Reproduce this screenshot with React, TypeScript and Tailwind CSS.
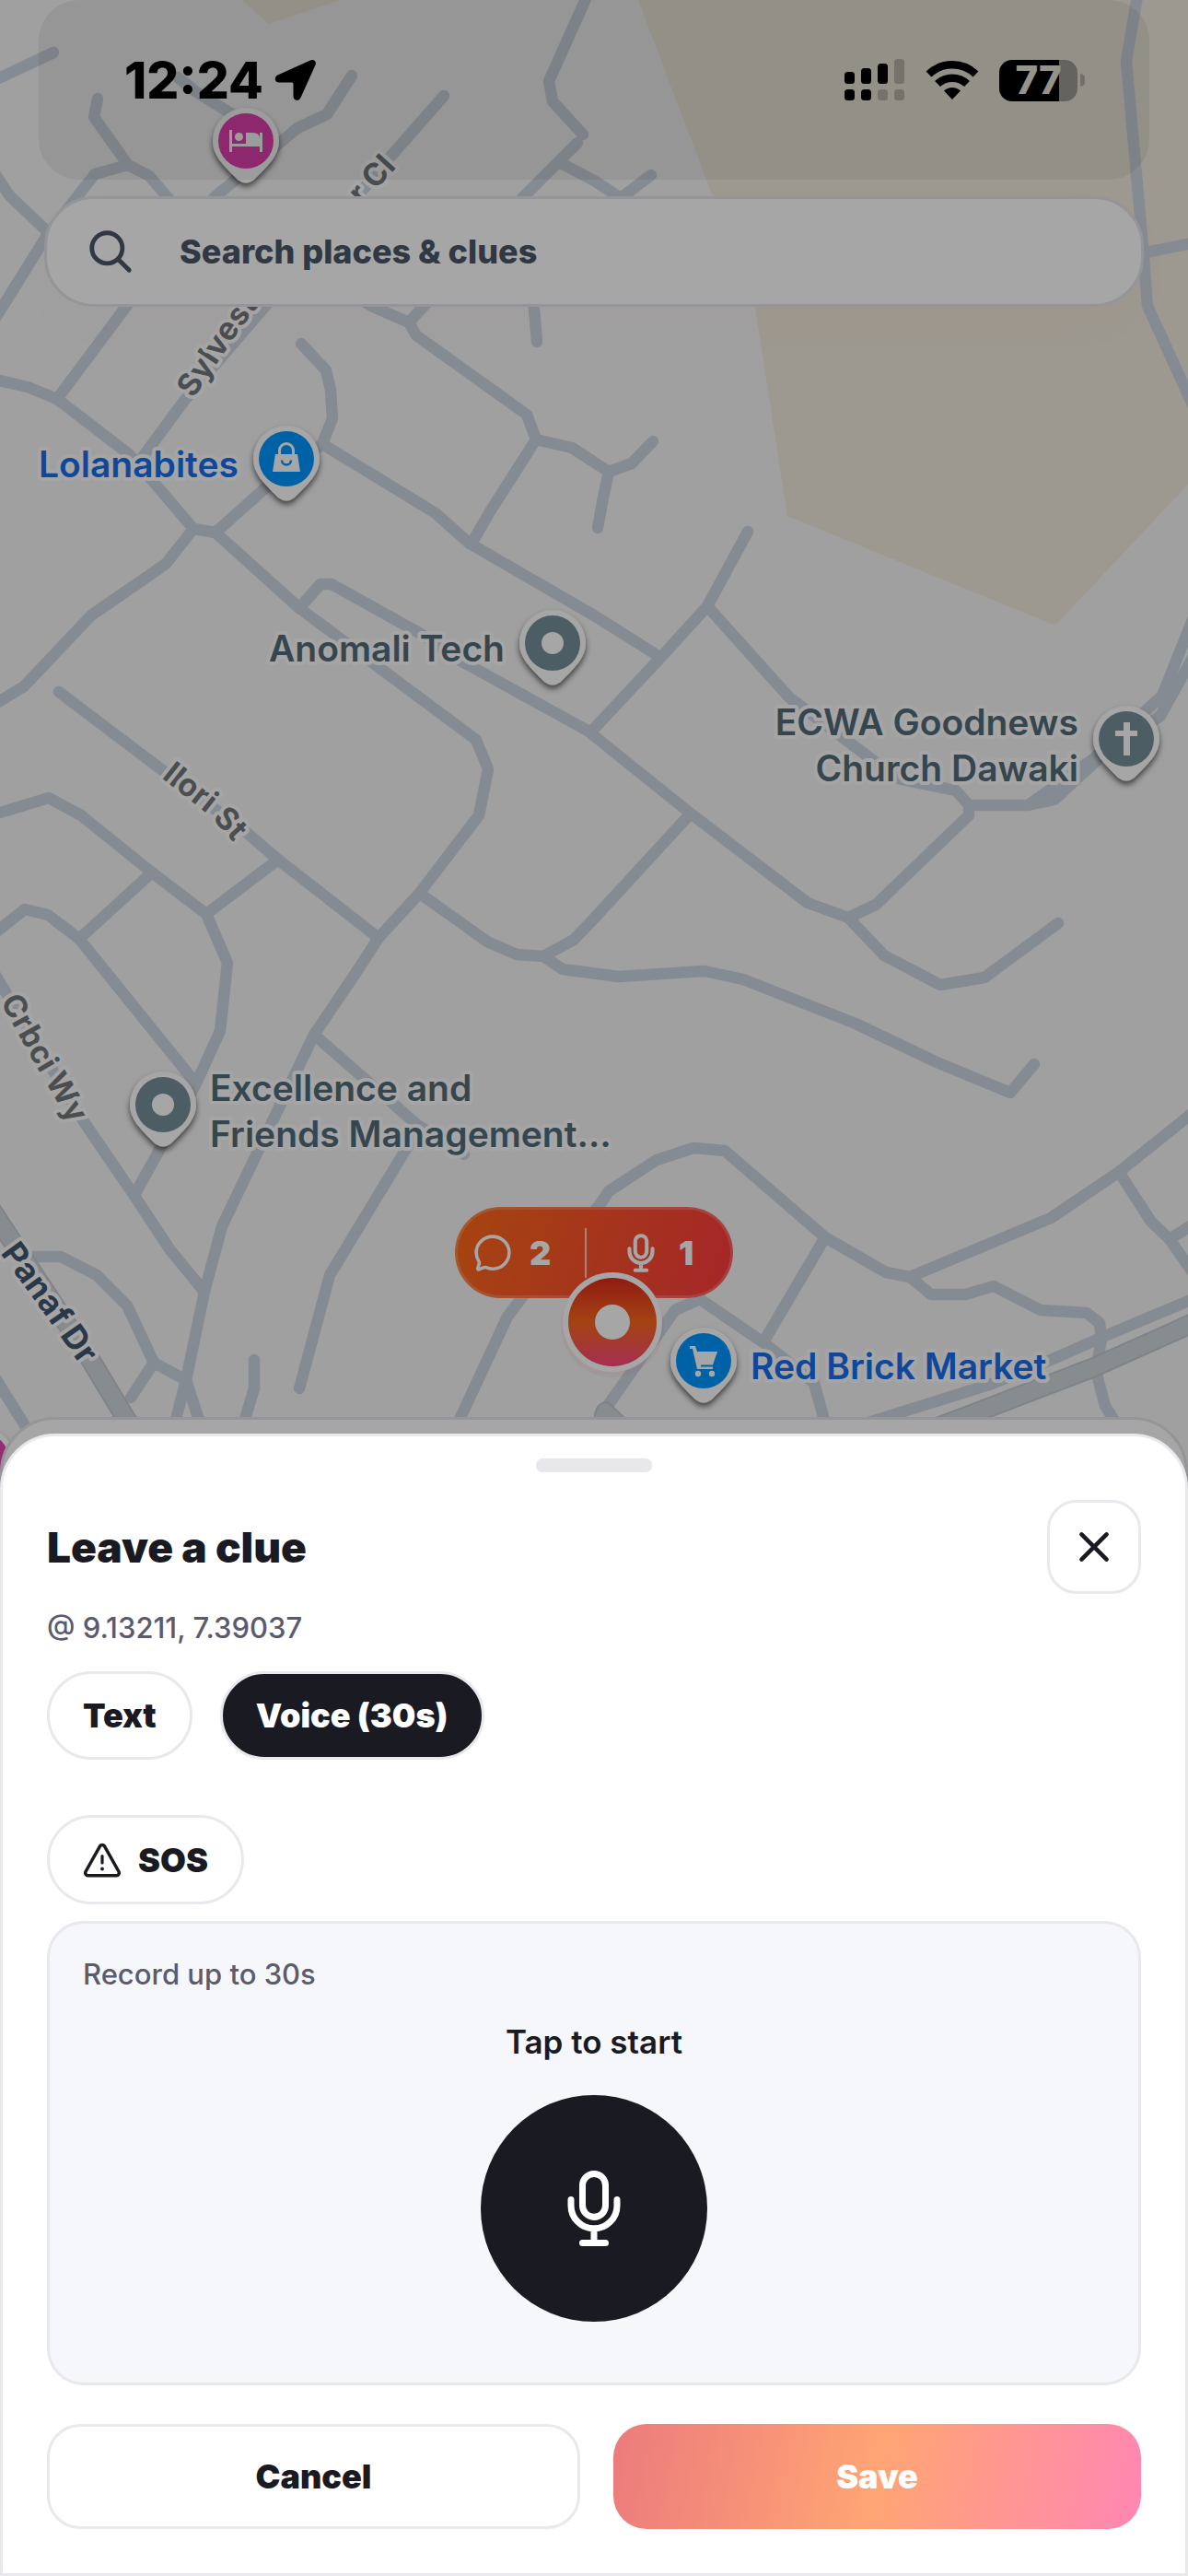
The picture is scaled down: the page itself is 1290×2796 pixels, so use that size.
import React, { useState } from "react";
import {
  IoChatbubbleOutline,
  IoCloseOutline,
  IoMicOutline,
  IoSearchOutline,
} from "react-icons/io5";

type PinIcon = "bed" | "bag" | "dot" | "cross" | "cart";

interface Place {
  id: string;
  lines: string[];
  icon: PinIcon;
  pinColor: string;
  textColor: string;
  labelSide: "left" | "right";
  x: number;
  y: number;
}

const MAP_W = 1290;
const MAP_H = 1600;

const roads = [
  "M-10 89 L58 57",
  "M106 107 L102 127 L139 179 L103 189 L52 254 L-8 350",
  "M139 179 L162 191 L200 235",
  "M-10 182 L10 212 L52 252",
  "M193 84 L212 99 L262 130",
  "M382 82 L355 124 L323 139 L233 214 L136 334 L62 433",
  "M482 104 L424 170 L290 330 L200 435 L152 500",
  "M-10 411 L30 420 L62 433 L140 493 L165 521 L210 574 L234 578 L325 660 L517 803 L530 835 L520 885 L455 970 L411 1018 L385 1058 L341 1123 L241 1331 L222 1402 L202 1498 L186 1560",
  "M210 574 L180 612 L99 668 L26 745 L-10 767",
  "M234 578 L290 528 L350 482 L361 454 L359 423 L354 402 L327 373",
  "M350 482 L473 557 L510 590 L645 668 L715 712",
  "M380 318 L403 332 L444 350 L452 364 L572 450 L582 477 L621 486 L661 512 L686 503 L709 479",
  "M661 512 L655 540 L649 573",
  "M582 477 L531 557 L512 590",
  "M444 350 L568 214 L627 155",
  "M640 -10 L596 88 L600 110 L633 146",
  "M609 177 L645 196 L674 215 L707 190",
  "M577 300 L583 371",
  "M1236 -10 L1223 66 L1241 268 L1246 332 L1300 450",
  "M1244 274 L1300 263",
  "M325 660 L348 634 L360 634 L457 688 L500 717 L638 793 L750 883 L877 980 L921 996 L960 1037 L1021 1069 L1069 1061 L1149 1002",
  "M812 577 L768 658 L719 712 L643 793",
  "M768 658 L857 757 L945 823 L974 845 L1038 858 L1052 874 L1116 874 L1188 823 L1262 755 L1300 660",
  "M1116 874 L1145 868 L1200 817 L1260 777 L1300 705",
  "M1052 874 L1052 885 L951 982 L921 996",
  "M748 885 L645 997 L623 1020 L590 1038",
  "M459 972 L529 1022 L561 1036 L590 1038 L611 1052 L672 1060 L765 1054 L807 1063 L929 1111 L1015 1152 L1097 1186 L1123 1155",
  "M64 751 L179 838 L267 903 L302 933 L411 1018",
  "M-10 885 L53 866 L88 885 L165 947 L224 992 L247 1045 L239 1119 L212 1178 L146 1297",
  "M302 933 L224 992",
  "M-10 1016 L27 987 L52 993 L86 1019 L119 1060 L212 1175",
  "M165 947 L86 1019",
  "M-10 1050 L90 1216 L146 1298 L185 1357 L222 1402",
  "M341 1123 L452 1220 L504 1253",
  "M452 1229 L358 1384 L325 1507",
  "M35 1364 L66 1364 L105 1384 L138 1417 L167 1479 L202 1498 L222 1560",
  "M167 1479 L142 1517",
  "M-10 1488 L30 1552",
  "M276 1476 L276 1507 L260 1560",
  "M490 1560 L551 1429 L600 1365 L651 1308 L661 1293 L713 1259 L753 1246 L787 1249 L896 1343 L962 1381 L988 1386 L1141 1322 L1215 1272 L1300 1204",
  "M1215 1272 L1250 1326 L1270 1345 L1300 1388",
  "M1270 1345 L1300 1326",
  "M896 1343 L830 1455",
  "M661 1524 L733 1422 L760 1410 L830 1458 L884 1501 L900 1560",
  "M988 1386 L1011 1405 L1048 1405 L1079 1396 L1130 1422 L1180 1425 L1194 1436 L1196 1453 L1190 1488 L1200 1526 L1222 1560",
  "M1300 1408 L1200 1450 L1139 1477 L1077 1502 L930 1548",
];

const highways = [
  "M-10 1312 L99 1477 L155 1570",
  "M1300 1434 L1188 1484 L1081 1525 L1000 1556",
];

const streets = [
  { id: "sylvester", text: "Sylvester", path: "M210 433 L260 358 L338 260", size: 34, fill: "#73787b" },
  { id: "sylvester-cl", text: "r Cl", path: "M393 223 L462 147", size: 34, fill: "#73787b" },
  { id: "ilori", text: "Ilori St", path: "M175 844 L226 884 L288 952", size: 34, fill: "#73787b" },
  { id: "crbci", text: "Crbci Wy", path: "M0 1087 L14 1112 L39 1157 L96 1253", size: 34, fill: "#73787b" },
  { id: "panaf", text: "Panaf Dr", path: "M0 1360 L51 1430 L117 1524", size: 36, fill: "#42566f" },
];

const places: Place[] = [
  { id: "hotel", lines: [], icon: "bed", pinColor: "#e742b5", textColor: "#b5308c", labelSide: "left", x: 267, y: 153 },
  { id: "hotel-2", lines: [], icon: "bed", pinColor: "#e742b5", textColor: "#b5308c", labelSide: "left", x: -20, y: 1585 },
  { id: "lolanabites", lines: ["Lolanabites"], icon: "bag", pinColor: "#0097ff", textColor: "#176fee", labelSide: "left", x: 311, y: 498 },
  { id: "anomali", lines: ["Anomali Tech"], icon: "dot", pinColor: "#76919a", textColor: "#526c78", labelSide: "left", x: 600, y: 698 },
  { id: "ecwa", lines: ["ECWA Goodnews", "Church Dawaki"], icon: "cross", pinColor: "#76919a", textColor: "#526c78", labelSide: "left", x: 1223, y: 802 },
  { id: "excellence", lines: ["Excellence and", "Friends Management…"], icon: "dot", pinColor: "#76919a", textColor: "#526c78", labelSide: "right", x: 177, y: 1199 },
  { id: "red-brick", lines: ["Red Brick Market"], icon: "cart", pinColor: "#0097ff", textColor: "#176fee", labelSide: "right", x: 764, y: 1477 },
];

const PinGlyph = ({ icon, color }: { icon: PinIcon; color: string }) => {
  switch (icon) {
    case "bed":
      return (
        <g fill="#fff">
          <path d="M-18 -12 h3 v15 h30 v-12 h3 v21 h-3 v-6 h-30 v6 h-3 z" />
          <circle cx="-7.500" cy="-4.500" r="4.500" />
          <path d="M0 -9 h7 q8 0 8 6 v6 h-15 z" />
        </g>
      );
    case "bag":
      return (
        <g>
          <path d="M-7.500 -4 v-5 a7.500 7.500 0 0 1 15 0 v5" fill="none" stroke="#fff" strokeWidth="3" />
          <path d="M-12 -5 h24 l3 19 h-30 z" fill="#fff" />
          <path d="M-5 1.500 a5 5 0 0 0 10 0" fill="none" stroke={color} strokeWidth="2.500" />
        </g>
      );
    case "cross":
      return <path d="M-3 -18 h7 v9 h8 v6 h-8 v21 h-7 v-21 h-9 v-6 h9 z" fill="#fff" />;
    case "cart":
      return (
        <g>
          <path d="M-15 -16 h6 l2 6 h22 l-5 14.500 h-13 v2 h13 v2.500 h-17 l-5 -22 h-3 z" fill="#fff" />
          <circle cx="-6" cy="14" r="3.200" fill="#fff" />
          <circle cx="9" cy="14" r="3.200" fill="#fff" />
        </g>
      );
    default:
      return <circle r="12" fill="#fff" />;
  }
};

const MapPin = ({ place }: { place: Place }) => {
  const toLeft = place.labelSide === "left";
  return (
    <g transform={`translate(${place.x} ${place.y})`}>
      <path
        d="M0 -36 A36 36 0 0 1 36 0 C36 16 24 27 9 42 Q0 49 -9 42 C-24 27 -36 16 -36 0 A36 36 0 0 1 0 -36 Z"
        fill="#fff"
        filter="url(#pin-shadow)"
      />
      <circle r="30" fill={place.pinColor} />
      <PinGlyph icon={place.icon} color={place.pinColor} />
      <text
        fontSize="39"
        fontWeight="600"
        fill={place.textColor}
        stroke="#fdfdfd"
        strokeWidth="8"
        strokeLinejoin="round"
        paintOrder="stroke"
        textAnchor={toLeft ? "end" : "start"}
      >
        {place.lines.map((line, i) => (
          <tspan key={line} x={toLeft ? -52 : 51} y={place.lines.length > 1 ? -4 + i * 50 : 20}>
            {line}
          </tspan>
        ))}
      </text>
    </g>
  );
};

const MapCanvas = () => (
  <svg
    className="absolute inset-x-0 top-0 h-[1600px] w-full"
    viewBox={`0 0 ${MAP_W} ${MAP_H}`}
    preserveAspectRatio="xMidYMin slice"
    fontFamily="Inter, sans-serif"
    aria-label="Map"
  >
    <defs>
      <filter id="pin-shadow" x="-30%" y="-30%" width="160%" height="170%">
        <feDropShadow dx="0" dy="4" stdDeviation="3" floodColor="#000" floodOpacity="0.6" />
      </filter>
      <linearGradient id="marker-fill" x1="0" y1="0" x2="0" y2="1">
        <stop offset="0" stopColor="#df2a1c" />
        <stop offset="0.5" stopColor="#fb671c" />
        <stop offset="1" stopColor="#fe487e" />
      </linearGradient>
      {streets.map((s) => (
        <path key={s.id} id={`street-${s.id}`} d={s.path} />
      ))}
    </defs>

    <rect width={MAP_W} height={MAP_H} fill="#f6f6f6" />
    <path d="M263 0 L292 26 L370 0 Z" fill="#f2ebdd" />
    <path d="M693 0 L774 213 L820 334 L855 560 L1146 679 L1300 515 V0 Z" fill="#f2ebdd" />

    <g fill="none" stroke="#cdd6e0" strokeWidth="12.500" strokeLinecap="round" strokeLinejoin="round">
      {roads.map((d) => (
        <path key={d} d={d} />
      ))}
    </g>
    {highways.map((d) => (
      <g key={d} fill="none">
        <path d={d} stroke="#c3cad2" strokeWidth="22" />
        <path d={d} stroke="#cfd9dc" strokeWidth="18" />
      </g>
    ))}
    <path d="M646 1560 V1536 Q648 1522 660 1522 L692 1552 Z" fill="#cfd9dc" stroke="#c3cad2" strokeWidth="2" />

    {streets.map((s) => (
      <text
        key={s.id}
        fontSize={s.size}
        fontWeight="700"
        fill={s.fill}
        stroke="#fdfdfd"
        strokeWidth="8"
        strokeLinejoin="round"
        paintOrder="stroke"
      >
        <textPath href={`#street-${s.id}`}>{s.text}</textPath>
      </text>
    ))}

    {places.map((p) => (
      <MapPin key={p.id} place={p} />
    ))}
  </svg>
);

const ClueCluster = () => (
  <div className="absolute left-1/2 top-[1310px] flex w-[302px] -translate-x-1/2 flex-col items-center">
    <div className="flex h-[99px] w-full items-center rounded-full border-[3px] border-white/20 bg-[linear-gradient(108deg,#fe6a18,#fe3a3f)] bg-origin-border pl-4 text-[36px] font-black text-white">
      <IoChatbubbleOutline className="size-11 [&_*]:[stroke-width:42px]" />
      <span className="ml-[18px] w-8">2</span>
      <span className="ml-7 h-[54px] w-[2px] bg-white/70" />
      <IoMicOutline className="ml-[34px] size-[50px] [&_*]:[stroke-width:42px]" />
      <span className="ml-4">1</span>
    </div>
    <svg className="-mt-9 ml-10 size-[124px]" viewBox="-62 -62 124 124">
      <circle cy="4" r="56" fill="#fe487e" opacity="0.08" />
      <circle r="54" fill="#fff" />
      <circle r="48" fill="url(#marker-fill)" />
      <circle r="19" fill="#fff" />
    </svg>
  </div>
);

const StatusBar = () => (
  <header className="relative z-20 mx-[42px] flex h-[195px] items-start justify-between rounded-[44px] bg-black/6 pl-[93px] pr-[70px] pt-[60px]">
    <div className="flex h-[54px] items-center gap-3">
      <span className="text-[55px] font-extrabold leading-none text-black">12:24</span>
      <svg className="h-[46px] w-[46px]" viewBox="0 0 46 46" fill="#000">
        <path d="M39 1.500 C42.500 0 46 2.500 44.500 6.500 L28.500 42 C26.500 46.500 20.500 45.500 20.500 40.500 V27 Q20.500 25.500 19 25.500 H5 C0 25.500 -0.500 19.500 3.500 17.500 Z" />
      </svg>
    </div>
    <div className="flex h-[54px] items-center gap-[22px]">
      <svg className="h-[46px] w-[66px]" viewBox="0 0 66 46">
        <g fill="#000">
          <rect x="0" y="14" width="11" height="13" rx="3.500" />
          <rect x="18" y="10" width="11" height="17" rx="3.500" />
          <rect x="36" y="5" width="11" height="22" rx="3.500" />
          <rect x="0" y="33" width="11" height="12" rx="3.500" />
          <rect x="18" y="33" width="11" height="12" rx="3.500" />
        </g>
        <g fill="#000" opacity="0.2">
          <rect x="54" y="0" width="11" height="27" rx="3.500" />
          <rect x="36" y="33" width="11" height="12" rx="3.500" />
          <rect x="54" y="33" width="11" height="12" rx="3.500" />
        </g>
      </svg>
      <svg className="h-[44px] w-[58px]" viewBox="0 0 58 44" fill="none">
        <path d="M3.500 15.500 A37 37 0 0 1 54.500 15.500" stroke="#000" strokeWidth="8.500" />
        <path d="M13 26 A23.500 23.500 0 0 1 45 26" stroke="#000" strokeWidth="8.500" />
        <path d="M29 43 L20 33.500 A13 13 0 0 1 38 33.500 Z" fill="#000" />
      </svg>
      <div className="flex items-center gap-[3px]">
        <div className="flex h-[45px] w-[85px] items-center justify-center rounded-[14px] bg-[linear-gradient(90deg,#000_65px,#65635d_65px)]">
          <span className="text-[42px] font-extrabold leading-none text-[#96938a]">77</span>
        </div>
        <span className="h-[14px] w-[5px] rounded-r-full bg-[#716f69]" />
      </div>
    </div>
  </header>
);

const SosIcon = () => (
  <svg className="h-[38px] w-[42px]" viewBox="0 0 42 38" fill="none" stroke="currentColor" strokeLinecap="round">
    <path
      d="M18.500 3.800 a3 3 0 0 1 5 0 L39 31.500 a3 3 0 0 1 -2.500 4.300 H5.500 A3 3 0 0 1 3 31.500 Z"
      strokeWidth="3.500"
      strokeLinejoin="round"
    />
    <path d="M21 14.500 V22" strokeWidth="3.200" />
    <path d="M21 28.500 V28.600" strokeWidth="3.800" />
  </svg>
);

const App = () => {
  const [mode, setMode] = useState<"text" | "voice">("voice");
  const [sos, setSos] = useState(false);

  return (
    <div className="relative flex min-h-screen flex-col overflow-hidden bg-[#f6f6f6] font-['Inter',sans-serif] text-[#1a1a23]">
      <div className="absolute inset-0">
        <MapCanvas />
        <ClueCluster />
      </div>

      <StatusBar />

      {/* Search */}
      <label className="relative mx-12 mt-[18px] flex h-[120px] items-center rounded-[54px] border-[3px] border-[#e5e5ec] bg-white pl-[42px] pr-10 text-[#4b5667] shadow-[0_20px_60px_rgba(254,72,126,0.02)]">
        <IoSearchOutline className="size-[54px] shrink-0 [&_*]:[stroke-width:46px]" />
        <input
          type="text"
          aria-label="Search places & clues"
          placeholder="Search places & clues"
          className="ml-12 min-w-0 flex-1 bg-transparent text-[36px] font-extrabold outline-none placeholder:text-[#4b5667] placeholder:opacity-100"
        />
      </label>

      {/* Drawer under the dialog */}
      <div className="absolute inset-x-0 bottom-0 h-[1258px] rounded-t-[60px] border-[3px] border-[#e5e5ec] bg-white" />

      {/* Backdrop */}
      <div className="absolute inset-0 z-10 bg-black/35" />

      <div className="flex-1" />

      {/* Leave a clue */}
      <section className="relative z-20 flex flex-col rounded-t-[60px] border-[3px] border-[#e8e8ed] bg-white px-12 pb-12 pt-6">
        <div className="h-[15px] w-[126px] self-center rounded-[7px] bg-[#e8e8ec]" />

        <div className="mt-[30px] flex items-center justify-between">
          <h1 className="text-[46px] font-black leading-[60px]">Leave a clue</h1>
          <button
            aria-label="Close"
            className="flex size-[102px] items-center justify-center rounded-[32px] border-[3px] border-[#e8e8ed] bg-white"
          >
            <IoCloseOutline className="size-[62px] [&_*]:[stroke-width:38px]" />
          </button>
        </div>

        <p className="mt-4 text-[31px] font-medium leading-[42px] text-[#5b5b6e]">@ 9.13211, 7.39037</p>

        <div className="mt-[26px] flex gap-[30px]">
          <button
            onClick={() => setMode("text")}
            className={`h-24 rounded-full border-[3px] border-[#e8e8ed] px-9 text-[36px] font-black ${
              mode === "text" ? "bg-[#1a1a23] text-white" : "bg-white"
            }`}
          >
            Text
          </button>
          <button
            onClick={() => setMode("voice")}
            className={`h-24 rounded-full border-[3px] border-[#e8e8ed] px-9 text-[36px] font-black ${
              mode === "voice" ? "bg-[#1a1a23] text-white" : "bg-white"
            }`}
          >
            Voice (30s)
          </button>
        </div>

        <button
          onClick={() => setSos(!sos)}
          aria-pressed={sos}
          className="mt-[60px] flex h-[97px] items-center gap-[18px] self-start rounded-full border-[3px] border-[#e8e8ed] bg-white px-9 text-[36px] font-black"
        >
          <SosIcon />
          SOS
        </button>

        <div className="mt-[18px] flex flex-col rounded-[40px] border-[3px] border-[#e8e8ed] bg-[#f6f7fb] px-9 pb-[66px] pt-[34px]">
          <p className="text-[31px] font-medium leading-[42px] text-[#5b5b6e]">Record up to 30s</p>
          <p className="mt-7 self-center text-[35px] font-semibold leading-[48px]">Tap to start</p>
          <button
            aria-label="Start recording"
            className="mt-[34px] flex size-[246px] items-center justify-center self-center rounded-full bg-[#1a1a23] text-white"
          >
            <IoMicOutline className="size-[100px] [&_*]:[stroke-width:36px]" />
          </button>
        </div>

        <div className="mt-[42px] flex gap-9">
          <button className="h-[114px] flex-1 rounded-[36px] border-[3px] border-[#e8e8ed] bg-white text-[36px] font-black">
            Cancel
          </button>
          <button className="h-[114px] flex-1 rounded-[36px] bg-[linear-gradient(101deg,#ec7b7c,#ffa574_50%,#ff86b3)] text-[36px] font-black text-white">
            Save
          </button>
        </div>
      </section>
    </div>
  );
};

export default App;
